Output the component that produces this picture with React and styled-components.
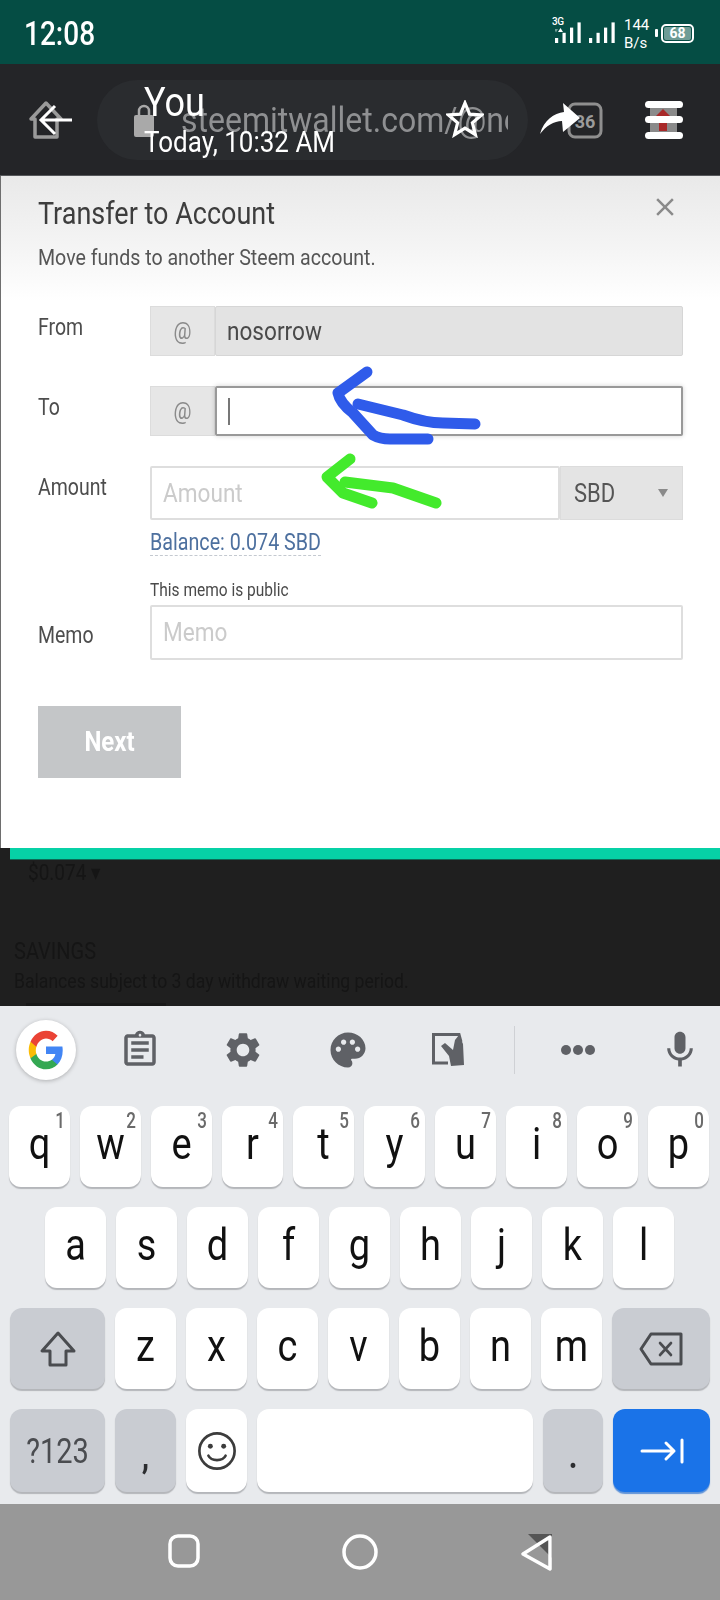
import React from "react";
import styled, { createGlobalStyle } from "styled-components";
import {
  MdSettings,
  MdPalette,
  MdOutlineAssignment,
  MdMic,
  MdClose,
} from "react-icons/md";

const GlobalStyle = createGlobalStyle`
  html, body {
    margin: 0;
    padding: 0;
    background: #1f1f1f;
  }
  * { box-sizing: border-box; }
`;

const Phone = styled.div`
  position: relative;
  width: 720px;
  height: 1600px;
  display: flex;
  flex-direction: column;
  overflow: hidden;
  font-family: Roboto, "Liberation Sans", sans-serif;
`;

// the screenshot is stretched a bit vertically, so text is too
const Tall = styled.span`
  display: inline-block;
  transform: scaleY(${(p) => p.$y || 1.18});
  transform-origin: center;
`;
const KeyLetter = styled(Tall)`
  margin-top: -5px;
`;

/* status bar */
const StatusBar = styled.div`
  height: 64px;
  flex: none;
  background: #054d44;
  display: flex;
  align-items: center;
  justify-content: space-between;
  padding: 0 26px 0 24px;
  color: #fff;
`;
const Clock = styled.div`
  font-size: 28px;
  font-weight: 500;
  margin-top: 2px;
`;
const StatusRight = styled.div`
  display: flex;
  align-items: center;
`;
const SignalWrap = styled.div`
  position: relative;
  width: 64px;
  height: 30px;
  margin-top: 4px;
`;
const NetType = styled.div`
  position: absolute;
  left: -3px;
  top: -2px;
  font-size: 10px;
  line-height: 10px;
  font-weight: 500;
  letter-spacing: -0.5px;
`;
const Speed = styled.div`
  width: 26px;
  margin-left: 5px;
  font-size: 15px;
  line-height: 18px;
  text-align: left;
  margin-top: 3px;
`;
const BatteryNub = styled.div`
  width: 3px;
  height: 8px;
  border-radius: 1px;
  background: #fff;
  margin: 2px 3px 0 5px;
`;
const Battery = styled.div`
  width: 33px;
  height: 19px;
  border: 2px solid #fff;
  border-radius: 5px;
  padding: 1px;
  margin-top: 2px;
  display: flex;
`;
const BatteryFill = styled.div`
  flex: 1;
  background: #6f9c96;
  border-radius: 2px;
  font-size: 14px;
  font-weight: 700;
  line-height: 13px;
  text-align: center;
`;

/* browser bar with the chat header drawn on top */
const Toolbar = styled.div`
  position: relative;
  height: 112px;
  flex: none;
  background: #242528;
  border-bottom: 1px solid #55575a;
  display: flex;
  align-items: center;
`;
const HomeSlot = styled.div`
  width: 97px;
  height: 40px;
  padding-left: 28px;
  flex: none;
`;
const AddressPill = styled.div`
  width: 431px;
  height: 80px;
  flex: none;
  border-radius: 40px;
  background: #2a2c2f;
  display: flex;
  align-items: center;
  padding-left: 37px;
  overflow: hidden;
`;
const LockIcon = styled.svg`
  flex: none;
  filter: blur(0.7px);
`;
const UrlText = styled.div`
  margin-left: 27px;
  width: 327px;
  overflow: hidden;
  white-space: nowrap;
  font-size: 32px;
  color: #8f9092;
  filter: blur(0.7px);
`;
const ShareSlot = styled.div`
  width: 116px;
  height: 40px;
  padding-left: 10px;
  flex: none;
`;
const MenuSlot = styled.div`
  height: 40px;
  flex: none;
`;
const ChatHead = styled.div`
  position: absolute;
  left: 144px;
  top: 14px;
  color: #fff;
`;
const ChatName = styled.div`
  font-size: 36px;
  line-height: 48px;
`;
const ChatTime = styled.div`
  font-size: 26px;
  line-height: 28px;
  margin-top: 2px;
`;
const StarIcon = styled.svg`
  position: absolute;
  left: 446px;
  top: 36px;
`;
const BackArrow = styled.svg`
  position: absolute;
  left: 38px;
  top: 38px;
`;

/* transfer dialog */
const Modal = styled.div`
  height: 672px;
  flex: none;
  position: relative;
  padding: 0 37px 0 37px;
  border-left: 1px solid #6e6e6e;
  background: linear-gradient(#e9e9e9 0, #f4f4f4 70px, #ffffff 125px);
  color: #4a4a4a;
  filter: blur(0.4px);
`;
const ModalHead = styled.div`
  height: 130px;
  padding-top: 18px;
`;
const ModalTitle = styled.div`
  font-size: 27px;
  line-height: 40px;
  color: #3d3d3d;
`;
const ModalSub = styled.div`
  font-size: 19.6px;
  line-height: 30px;
  margin-top: 9px;
  color: #555;
`;
const CloseBtn = styled.div`
  position: absolute;
  right: 40px;
  top: 16px;
  color: #8a8a8a;
  font-size: 30px;
  display: flex;
`;
const Row = styled.div`
  display: flex;
  align-items: flex-start;
  margin-bottom: ${(p) => p.$mb ?? 30}px;
`;
const Label = styled.div`
  width: 112px;
  flex: none;
  font-size: 19.5px;
  line-height: 28px;
  padding-top: ${(p) => p.$pt || 8}px;
  color: #4d4d4d;
`;
const Field = styled.div`
  flex: ${(p) => (p.$h ? "none" : 1)};
  display: flex;
  height: ${(p) => p.$h || 50}px;
  border-radius: 2px;
`;
const AtBox = styled.div`
  width: 65px;
  flex: none;
  background: #e6e6e6;
  border: 1px solid #dcdcdc;
  color: #8a8a8a;
  font-size: 20px;
  display: flex;
  align-items: center;
  justify-content: center;
`;
const ValueBox = styled.div`
  flex: 1;
  background: ${(p) => (p.$disabled ? "#e3e3e3" : "#fff")};
  border: ${(p) =>
    p.$disabled
      ? "1px solid #d6d6d6"
      : p.$active
      ? "2px solid #999"
      : "2px solid #dedede"};
  border-radius: 2px;
  display: flex;
  align-items: center;
  padding-left: 11px;
  font-size: 22.6px;
  box-shadow: ${(p) => (p.$active ? "0 0 5px rgba(0,0,0,0.18)" : "none")};
  color: ${(p) => (p.$placeholder ? "#cbcbcb" : "#4a4a4a")};
`;
const Caret = styled.div`
  width: 2px;
  height: 27px;
  background: #777;
`;
const UnitBox = styled.div`
  width: 123px;
  flex: none;
  background: #e4e4e4;
  border: 1px solid #dcdcdc;
  display: flex;
  align-items: center;
  justify-content: space-between;
  padding: 0 14px 0 13px;
  font-size: 22px;
  color: #555;
`;
const CaretDown = styled.div`
  width: 0;
  height: 0;
  border-left: 5px solid transparent;
  border-right: 5px solid transparent;
  border-top: 8px solid #8a8a8a;
`;
const FieldColumn = styled.div`
  flex: 1;
  display: flex;
  flex-direction: column;
`;
const Balance = styled.div`
  align-self: flex-start;
  font-size: 19.7px;
  line-height: 24px;
  margin-top: 11px;
  color: #4d709f;
  border-bottom: 1px dashed #c4c9d0;
`;
const MemoHint = styled.div`
  font-size: 15.5px;
  line-height: 20px;
  margin: 24px 0 5px;
  color: #4a4a4a;
`;
const NextButton = styled.div`
  width: 143px;
  height: 72px;
  margin-top: 46px;
  background: #c4c6c8;
  color: #fff;
  font-size: 24px;
  font-weight: 700;
  display: flex;
  align-items: center;
  justify-content: center;
`;
const TealEdge = styled.div`
  height: 12px;
  flex: none;
  margin-left: 10px;
  background: #06d1a6;
  border-bottom: 1px solid #0c6a55;
`;

/* page dimmed behind the dialog */
const Dimmed = styled.div`
  height: 146px;
  flex: none;
  background: #1f1f1f;
  color: #151515;
  overflow: hidden;
  filter: blur(0.6px);
  padding-left: 14px;
`;
const DimPrice = styled.div`
  font-size: 19px;
  line-height: 24px;
  padding: 1px 0 0 14px;
`;
const DimHead = styled.div`
  font-size: 20px;
  line-height: 26px;
  margin-top: 53px;
`;
const DimText = styled.div`
  font-size: 17.6px;
  line-height: 24px;
  margin-top: 5px;
`;
const DimSliver = styled.div`
  width: 140px;
  height: 3px;
  margin: 10px 0 0 12px;
  background: #181818;
`;

/* keyboard */
const Keyboard = styled.div`
  height: 498px;
  flex: none;
  background: #e8eaed;
  filter: blur(0.3px);
`;
const KbTools = styled.div`
  height: 100px;
  padding-bottom: 12px;
  display: flex;
  align-items: center;
  color: #5f6166;
`;
const ToolSlot = styled.div`
  width: ${(p) => p.$w}px;
  flex: none;
  display: flex;
  align-items: center;
  justify-content: center;
`;
const GoogleBall = styled.div`
  width: 60px;
  height: 60px;
  border-radius: 50%;
  background: #fff;
  box-shadow: 0 1px 4px rgba(0, 0, 0, 0.25);
  display: flex;
  align-items: center;
  justify-content: center;
`;
const ToolDivider = styled.div`
  width: 1px;
  height: 48px;
  background: #cfd1d5;
`;
const KeyRows = styled.div`
  display: flex;
  flex-direction: column;
  gap: 20px;
`;
const KeyRow = styled.div`
  display: flex;
  gap: 10px;
  height: ${(p) => p.$h || 81}px;
  padding-left: ${(p) => p.$pl}px;
`;
const Key = styled.div`
  position: relative;
  width: ${(p) => p.$w || 61}px;
  flex: none;
  border-radius: 12px;
  background: ${(p) =>
    p.$kind === "accent" ? "#1a73e8" : p.$kind === "fn" ? "#c9ccd2" : "#fff"};
  box-shadow: 0 2px 1px
    ${(p) => (p.$kind === "accent" ? "#5f93d8" : "#b4b6ba")};
  display: flex;
  align-items: ${(p) => (p.$low ? "flex-end" : "center")};
  justify-content: center;
  padding-bottom: ${(p) => (p.$low ? 19 : 0)}px;
  font-size: ${(p) => p.$size || 38}px;
  font-weight: ${(p) => (p.$low ? 700 : 400)};
  color: ${(p) => (p.$low ? "#2c2d30" : p.$kind === "fn" ? "#4a4c50" : "#111")};
`;
const KeyHint = styled.span`
  position: absolute;
  right: 5px;
  top: 2px;
  font-size: 17px;
  font-weight: 500;
  line-height: 24px;
  color: #6a6a6a;
`;

/* android nav */
const NavBar = styled.div`
  flex: 1;
  background: #989898;
  position: relative;
  display: flex;
  align-items: center;
`;
const NavSlot = styled.div`
  position: absolute;
  left: ${(p) => p.$x}px;
  top: 30px;
  display: flex;
`;
const Annotations = styled.svg`
  position: absolute;
  left: 0;
  top: 0;
  pointer-events: none;
`;

const row1 = [
  ["q", 1], ["w", 2], ["e", 3], ["r", 4], ["t", 5],
  ["y", 6], ["u", 7], ["i", 8], ["o", 9], ["p", 0],
];
const row2 = ["a", "s", "d", "f", "g", "h", "j", "k", "l"];
const row3 = ["z", "x", "c", "v", "b", "n", "m"];

function Signal() {
  const bars = [0, 1, 2, 3];
  return (
    <svg width="64" height="30" viewBox="0 0 64 30" fill="#fff">
      {[0, 34].map((off) =>
        bars.map((b) => (
          <rect
            key={off + "-" + b}
            x={off + b * 7.5}
            y={24 - (5 + b * 5.2)}
            width="3.2"
            height={5 + b * 5.2}
          />
        ))
      )}
      <path d="M3 13l2.500-4 2.500 4z" />
      <path d="M-1 10h4l-2 3.500z" fill="#6f9c96" />
    </svg>
  );
}

function GoogleG() {
  return (
    <svg width="38" height="42" viewBox="0 0 48 48" preserveAspectRatio="none">
      <path fill="#4285F4" d="M45.100 24.500c0-1.600-.1-3.100-.4-4.500H24v8.500h11.800c-.5 2.700-2 5-4.400 6.600v5.500h7.100c4.200-3.800 6.600-9.500 6.600-16.100z" />
      <path fill="#34A853" d="M24 46c5.900 0 10.900-2 14.500-5.400l-7.100-5.500c-2 1.300-4.500 2.100-7.400 2.100-5.700 0-10.500-3.800-12.200-9H4.500v5.700C8.100 41.100 15.500 46 24 46z" />
      <path fill="#FBBC05" d="M11.800 28.700c-.4-1.300-.7-2.700-.7-4.200s.3-2.900.7-4.200v-5.700H4.500C3 17.600 2.200 20.700 2.200 24s.8 6.400 2.300 9.400l7.300-4.700z" />
      <path fill="#EA4335" d="M24 10.800c3.200 0 6.100 1.100 8.400 3.300l6.300-6.300C34.900 4.200 29.900 2 24 2 15.500 2 8.100 6.900 4.500 14.600l7.300 5.700c1.700-5.200 6.500-9.500 12.200-9.500z" />
    </svg>
  );
}

function TabletHand() {
  return (
    <svg width="36" height="36" viewBox="0 0 36 36" fill="none">
      <path d="M17 31H2.500V2.500H28L30 10" stroke="#5f6166" strokeWidth="3" />
      <path d="M10 14l4-3 8 7 2-10 4-5 4 9 1 21-13 1-2-10z" fill="#5f6166" />
    </svg>
  );
}

function ShiftIcon() {
  return (
    <svg width="38" height="38" viewBox="0 0 38 38" fill="none" stroke="#4a4c50" strokeWidth="3" strokeLinejoin="round">
      <path d="M19 3L3 21h8v14h16V21h8z" />
    </svg>
  );
}

function BackspaceIcon() {
  return (
    <svg width="44" height="34" viewBox="0 0 44 34" fill="none" stroke="#4a4c50" strokeWidth="3" strokeLinejoin="round" strokeLinecap="round">
      <path d="M12 2h30v30H12L2 17z" />
      <path d="M21 11l11 12M32 11L21 23" strokeWidth="2.600" />
    </svg>
  );
}

function EmojiIcon() {
  return (
    <svg width="40" height="40" viewBox="0 0 42 42" fill="none" stroke="#3c3c3c" strokeWidth="2.800">
      <circle cx="21" cy="21" r="18.500" />
      <circle cx="14" cy="16" r="2.600" fill="#3c3c3c" stroke="none" />
      <circle cx="28" cy="16" r="2.600" fill="#3c3c3c" stroke="none" />
      <path d="M12 26c3 6 15 6 18 0" strokeLinecap="round" />
    </svg>
  );
}

function NextFieldIcon() {
  return (
    <svg width="44" height="26" viewBox="0 0 44 26" fill="none" stroke="#fff" strokeWidth="3" strokeLinecap="round" strokeLinejoin="round">
      <path d="M2 13h32M26 5l8 8-8 8M42 2v22" />
    </svg>
  );
}

export default function App() {
  return (
    <Phone>
      <GlobalStyle />
      <StatusBar>
        <Clock><Tall>12:08</Tall></Clock>
        <StatusRight>
          <SignalWrap>
            <NetType>3G</NetType>
            <Signal />
          </SignalWrap>
          <Speed>
            <div>144</div>
            <div>B/s</div>
          </Speed>
          <BatteryNub />
          <Battery>
            <BatteryFill>68</BatteryFill>
          </Battery>
        </StatusRight>
      </StatusBar>

      <Toolbar>
        <HomeSlot>
          <svg width="36" height="40" viewBox="0 0 36 40" fill="none" stroke="#9a9a9a" strokeWidth="3.500" strokeLinejoin="round">
            <path d="M3 19L18 3l15 16h-4v18H7V19z" />
          </svg>
        </HomeSlot>
        <AddressPill>
          <LockIcon width="20" height="34" viewBox="0 0 20 34">
            <path d="M5 12V8a5 5 0 0110 0v4" fill="none" stroke="#a9a9a9" strokeWidth="2.500" />
            <rect x="0" y="12" width="20" height="22" rx="2" fill="#a9a9a9" />
          </LockIcon>
          <UrlText><Tall $y={1.1}>steemitwallet.com/@nosorrow</Tall></UrlText>
        </AddressPill>
        <ShareSlot>
          <svg width="66" height="40" viewBox="0 0 66 40">
            <rect x="31" y="4" width="32" height="33" rx="6" fill="none" stroke="#8f8f8f" strokeWidth="3" />
            <text x="47" y="28" textAnchor="middle" fontFamily="Roboto, sans-serif" fontWeight="700" fontSize="18" fill="#9b9b9b">36</text>
            <path d="M2 34C6 20 16 13 26 12L25 3l17 15-17 14-1-11C16 21 8 26 2 34z" fill="#fff" />
          </svg>
        </ShareSlot>
        <MenuSlot>
          <svg width="40" height="40" viewBox="0 0 40 40">
            <rect x="6" y="6" width="27" height="28" fill="#8a8a8a" />
            <path d="M19 9l8 8h-4v14h-8V17h-4z" fill="#a82828" />
            <rect x="1" y="1" width="38" height="7" rx="3.500" fill="#fff" />
            <rect x="1" y="16" width="38" height="7" rx="3.500" fill="#fff" />
            <rect x="1" y="32" width="38" height="7" rx="3.500" fill="#fff" />
          </svg>
        </MenuSlot>

        <BackArrow width="36" height="36" viewBox="0 0 36 36" fill="none" stroke="#fff" strokeWidth="3">
          <path d="M34 18H4M17 4L3 18l14 14" />
        </BackArrow>
        <StarIcon width="38" height="38" viewBox="0 0 38 38" fill="none" stroke="#fff" strokeWidth="3.200" strokeLinejoin="miter">
          <path d="M19 3l4.600 11.200 12 .8-9.200 7.800 3 11.900L19 28.200 8.600 34.700l3-11.900L2.400 15l12-.8z" />
        </StarIcon>
        <ChatHead>
          <ChatName><Tall $y={1.15}>You</Tall></ChatName>
          <ChatTime><Tall $y={1.15}>Today, 10:32 AM</Tall></ChatTime>
        </ChatHead>
      </Toolbar>

      <Modal>
        <ModalHead>
          <ModalTitle><Tall $y={1.15}>Transfer to Account</Tall></ModalTitle>
          <ModalSub><Tall $y={1.15}>Move funds to another Steem account.</Tall></ModalSub>
        </ModalHead>
        <CloseBtn><MdClose /></CloseBtn>

        <Row>
          <Label $pt={8}><Tall>From</Tall></Label>
          <Field>
            <AtBox><Tall>@</Tall></AtBox>
            <ValueBox $disabled><Tall>nosorrow</Tall></ValueBox>
          </Field>
        </Row>
        <Row>
          <Label $pt={8}><Tall>To</Tall></Label>
          <Field>
            <AtBox><Tall>@</Tall></AtBox>
            <ValueBox $active><Caret /></ValueBox>
          </Field>
        </Row>
        <Row $mb={0}>
          <Label $pt={8}><Tall>Amount</Tall></Label>
          <FieldColumn>
            <Field $h={54}>
              <ValueBox $placeholder><Tall>Amount</Tall></ValueBox>
              <UnitBox><Tall>SBD</Tall><CaretDown /></UnitBox>
            </Field>
            <Balance><Tall>Balance: 0.074 SBD</Tall></Balance>
          </FieldColumn>
        </Row>
        <Row $mb={0}>
          <Label $pt={66}><Tall>Memo</Tall></Label>
          <FieldColumn>
            <MemoHint><Tall>This memo is public</Tall></MemoHint>
            <Field $h={55}>
              <ValueBox $placeholder><Tall>Memo</Tall></ValueBox>
            </Field>
          </FieldColumn>
        </Row>
        <NextButton><Tall>Next</Tall></NextButton>
      </Modal>
      <TealEdge />

      <Dimmed>
        <DimPrice><Tall>$0.074 ▾</Tall></DimPrice>
        <DimHead><Tall>SAVINGS</Tall></DimHead>
        <DimText><Tall>Balances subject to 3 day withdraw waiting period.</Tall></DimText>
        <DimSliver />
      </Dimmed>

      <Keyboard>
        <KbTools>
          <ToolSlot $w={92}><GoogleBall><GoogleG /></GoogleBall></ToolSlot>
          <ToolSlot $w={96}><MdOutlineAssignment size={42} /></ToolSlot>
          <ToolSlot $w={110}><MdSettings size={42} /></ToolSlot>
          <ToolSlot $w={100}><MdPalette size={42} /></ToolSlot>
          <ToolSlot $w={102}><TabletHand /></ToolSlot>
          <ToolSlot $w={28}><ToolDivider /></ToolSlot>
          <ToolSlot $w={100}>
            <svg width="36" height="12" viewBox="0 0 36 12" fill="#5f6166">
              <circle cx="6" cy="6" r="5" />
              <circle cx="18" cy="6" r="5" />
              <circle cx="30" cy="6" r="5" />
            </svg>
          </ToolSlot>
          <ToolSlot $w={12} />
          <ToolSlot $w={80}><MdMic size={44} /></ToolSlot>
        </KbTools>
        <KeyRows>
          <KeyRow $pl={9}>
            {row1.map(([k, n]) => (
              <Key key={k}>
                <KeyLetter>{k}</KeyLetter>
                <KeyHint><Tall $y={1.25}>{n}</Tall></KeyHint>
              </Key>
            ))}
          </KeyRow>
          <KeyRow $pl={45}>
            {row2.map((k) => (
              <Key key={k}><KeyLetter>{k}</KeyLetter></Key>
            ))}
          </KeyRow>
          <KeyRow $pl={10}>
            <Key $w={95} $kind="fn"><ShiftIcon /></Key>
            {row3.map((k) => (
              <Key key={k}><KeyLetter>{k}</KeyLetter></Key>
            ))}
            <Key $w={98} $kind="fn"><BackspaceIcon /></Key>
          </KeyRow>
          <KeyRow $pl={10} $h={83}>
            <Key $w={95} $kind="fn" $size={29}><Tall>?123</Tall></Key>
            <Key $kind="fn" $low $size={30}><Tall>,</Tall></Key>
            <Key><EmojiIcon /></Key>
            <Key $w={276} />
            <Key $w={60} $kind="fn" $low $size={30}><Tall>.</Tall></Key>
            <Key $w={97} $kind="accent"><NextFieldIcon /></Key>
          </KeyRow>
        </KeyRows>
      </Keyboard>

      <NavBar>
        <NavSlot $x={168}>
          <svg width="32" height="34" viewBox="0 0 32 34" fill="none" stroke="#fff" strokeWidth="3.500">
            <rect x="2" y="2" width="28" height="30" rx="8" />
          </svg>
        </NavSlot>
        <NavSlot $x={342}>
          <svg width="36" height="36" viewBox="0 0 36 36" fill="none" stroke="#fff" strokeWidth="3.500">
            <circle cx="18" cy="18" r="16" />
          </svg>
        </NavSlot>
        <NavSlot $x={520}>
          <svg width="34" height="38" viewBox="0 0 34 38" fill="none">
            <path d="M8 0h24v24z" fill="#555" />
            <path d="M30 3L3 20l27 15z" stroke="#fff" strokeWidth="3.500" strokeLinejoin="round" />
          </svg>
        </NavSlot>
      </NavBar>

      <Annotations width="720" height="1600" viewBox="0 0 720 1600" fill="none" strokeLinecap="round" strokeLinejoin="round" strokeWidth="11">
        <path stroke="#2f5bea" d="M367 372L338 393Q340 403 353 413L373 435Q380 439 390 439L428 439" />
        <path stroke="#2f5bea" d="M358 404L403 415Q425 423 443 423L475 424" />
        <path stroke="#43ea2c" d="M350 459L327 477L343 493L372 503" />
        <path stroke="#43ea2c" d="M345 482L393 488L436 503" />
      </Annotations>
    </Phone>
  );
}
